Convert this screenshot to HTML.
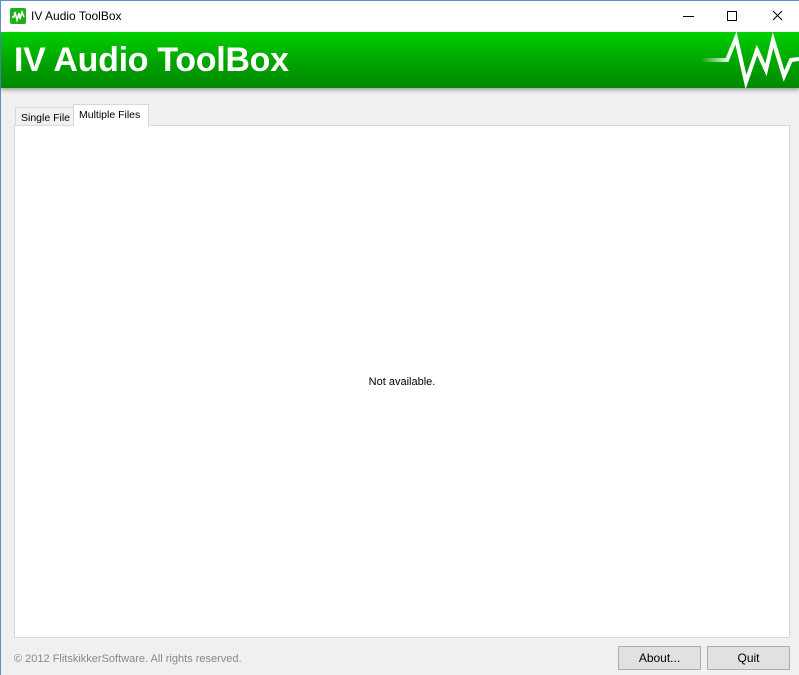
<!DOCTYPE html>
<html><head><style>
body{margin:0;width:799px;height:675px;overflow:hidden;background:#f0f0f0;font-family:"Liberation Sans",sans-serif;position:relative}
.tb{position:absolute;left:0;top:0;width:799px;height:32px;background:#fff;border-top:1px solid #5a8fd0;box-sizing:border-box}
.lb{position:absolute;left:0;top:0;width:1px;height:675px;background:#5a8fd0}
.ttl{position:absolute;left:31px;top:9px;font-size:12px;color:#000}
.ico{position:absolute;left:10px;top:8px;width:16px;height:16px;background:#1cb01c;border-radius:2px}
.ban{position:absolute;left:1px;top:32px;width:798px;height:56px;background:linear-gradient(#00d000,#00a000 60%,#008a00);box-shadow:0 2px 4px rgba(0,0,0,.35)}
.ban h1{margin:0;position:absolute;left:13px;top:9px;font-size:34px;color:#fff;font-weight:bold;letter-spacing:-0.3px}
.tab{position:absolute;font-size:10.5px;color:#000;border:1px solid #d9d9d9;box-sizing:border-box;padding:3px 5px;white-space:nowrap;overflow:hidden}
.panel{position:absolute;left:14px;top:125px;width:776px;height:513px;background:#fff;border:1px solid #d9d9d9;box-sizing:border-box}
.btn{position:absolute;top:646px;height:24px;width:83px;background:#e1e1e1;border:1px solid #adadad;box-sizing:border-box;font-size:12px;text-align:center;line-height:22px}
</style></head><body>
<div class="tb"></div><div class="lb"></div>
<div class="ico"><svg width="16" height="16"><polyline points="2,9 4,9 5,4 7,12 9,5 10,11 12,4 14,9" fill="none" stroke="#fff" stroke-width="1.5"/></svg></div>
<div class="ttl">IV Audio ToolBox</div>
<svg style="position:absolute;left:680px;top:8px" width="110" height="18"><line x1="3" y1="8.5" x2="14" y2="8.5" stroke="#000"/><rect x="47.5" y="3.5" width="9" height="9" fill="none" stroke="#000"/><path d="M93 3L102 12M102 3L93 12" stroke="#000"/></svg>
<div class="ban"><h1>IV Audio ToolBox</h1>
<svg style="position:absolute;left:690px;top:0" width="108" height="56"><defs><linearGradient id="g" x1="0" x2="1"><stop offset="0" stop-color="#fff" stop-opacity="0"/><stop offset=".3" stop-color="#fff"/></linearGradient></defs><polyline points="10,28 36,28 45,6 55,50 66,18 75,38 82,8 93,44 100,28 108,27" fill="none" stroke="url(#g)" stroke-width="4" stroke-linejoin="miter"/></svg></div>
<div class="tab" style="left:15px;top:107px;height:19px;width:59px;background:#f0f0f0;padding-top:4px">Single File</div>
<div class="tab" style="left:73px;top:104px;height:22px;width:76px;background:#fff;border-bottom:none;z-index:2;padding-top:4px">Multiple Files</div>
<div class="panel"><div style="position:absolute;left:0;right:0;top:250px;text-align:center;font-size:11px">Not available.</div></div>
<div style="position:absolute;left:14px;top:653px;font-size:11px;color:#8a8a8a">© 2012 FlitskikkerSoftware. All rights reserved.</div>
<div class="btn" style="left:618px">About...</div>
<div class="btn" style="left:707px">Quit</div>
</body></html>
